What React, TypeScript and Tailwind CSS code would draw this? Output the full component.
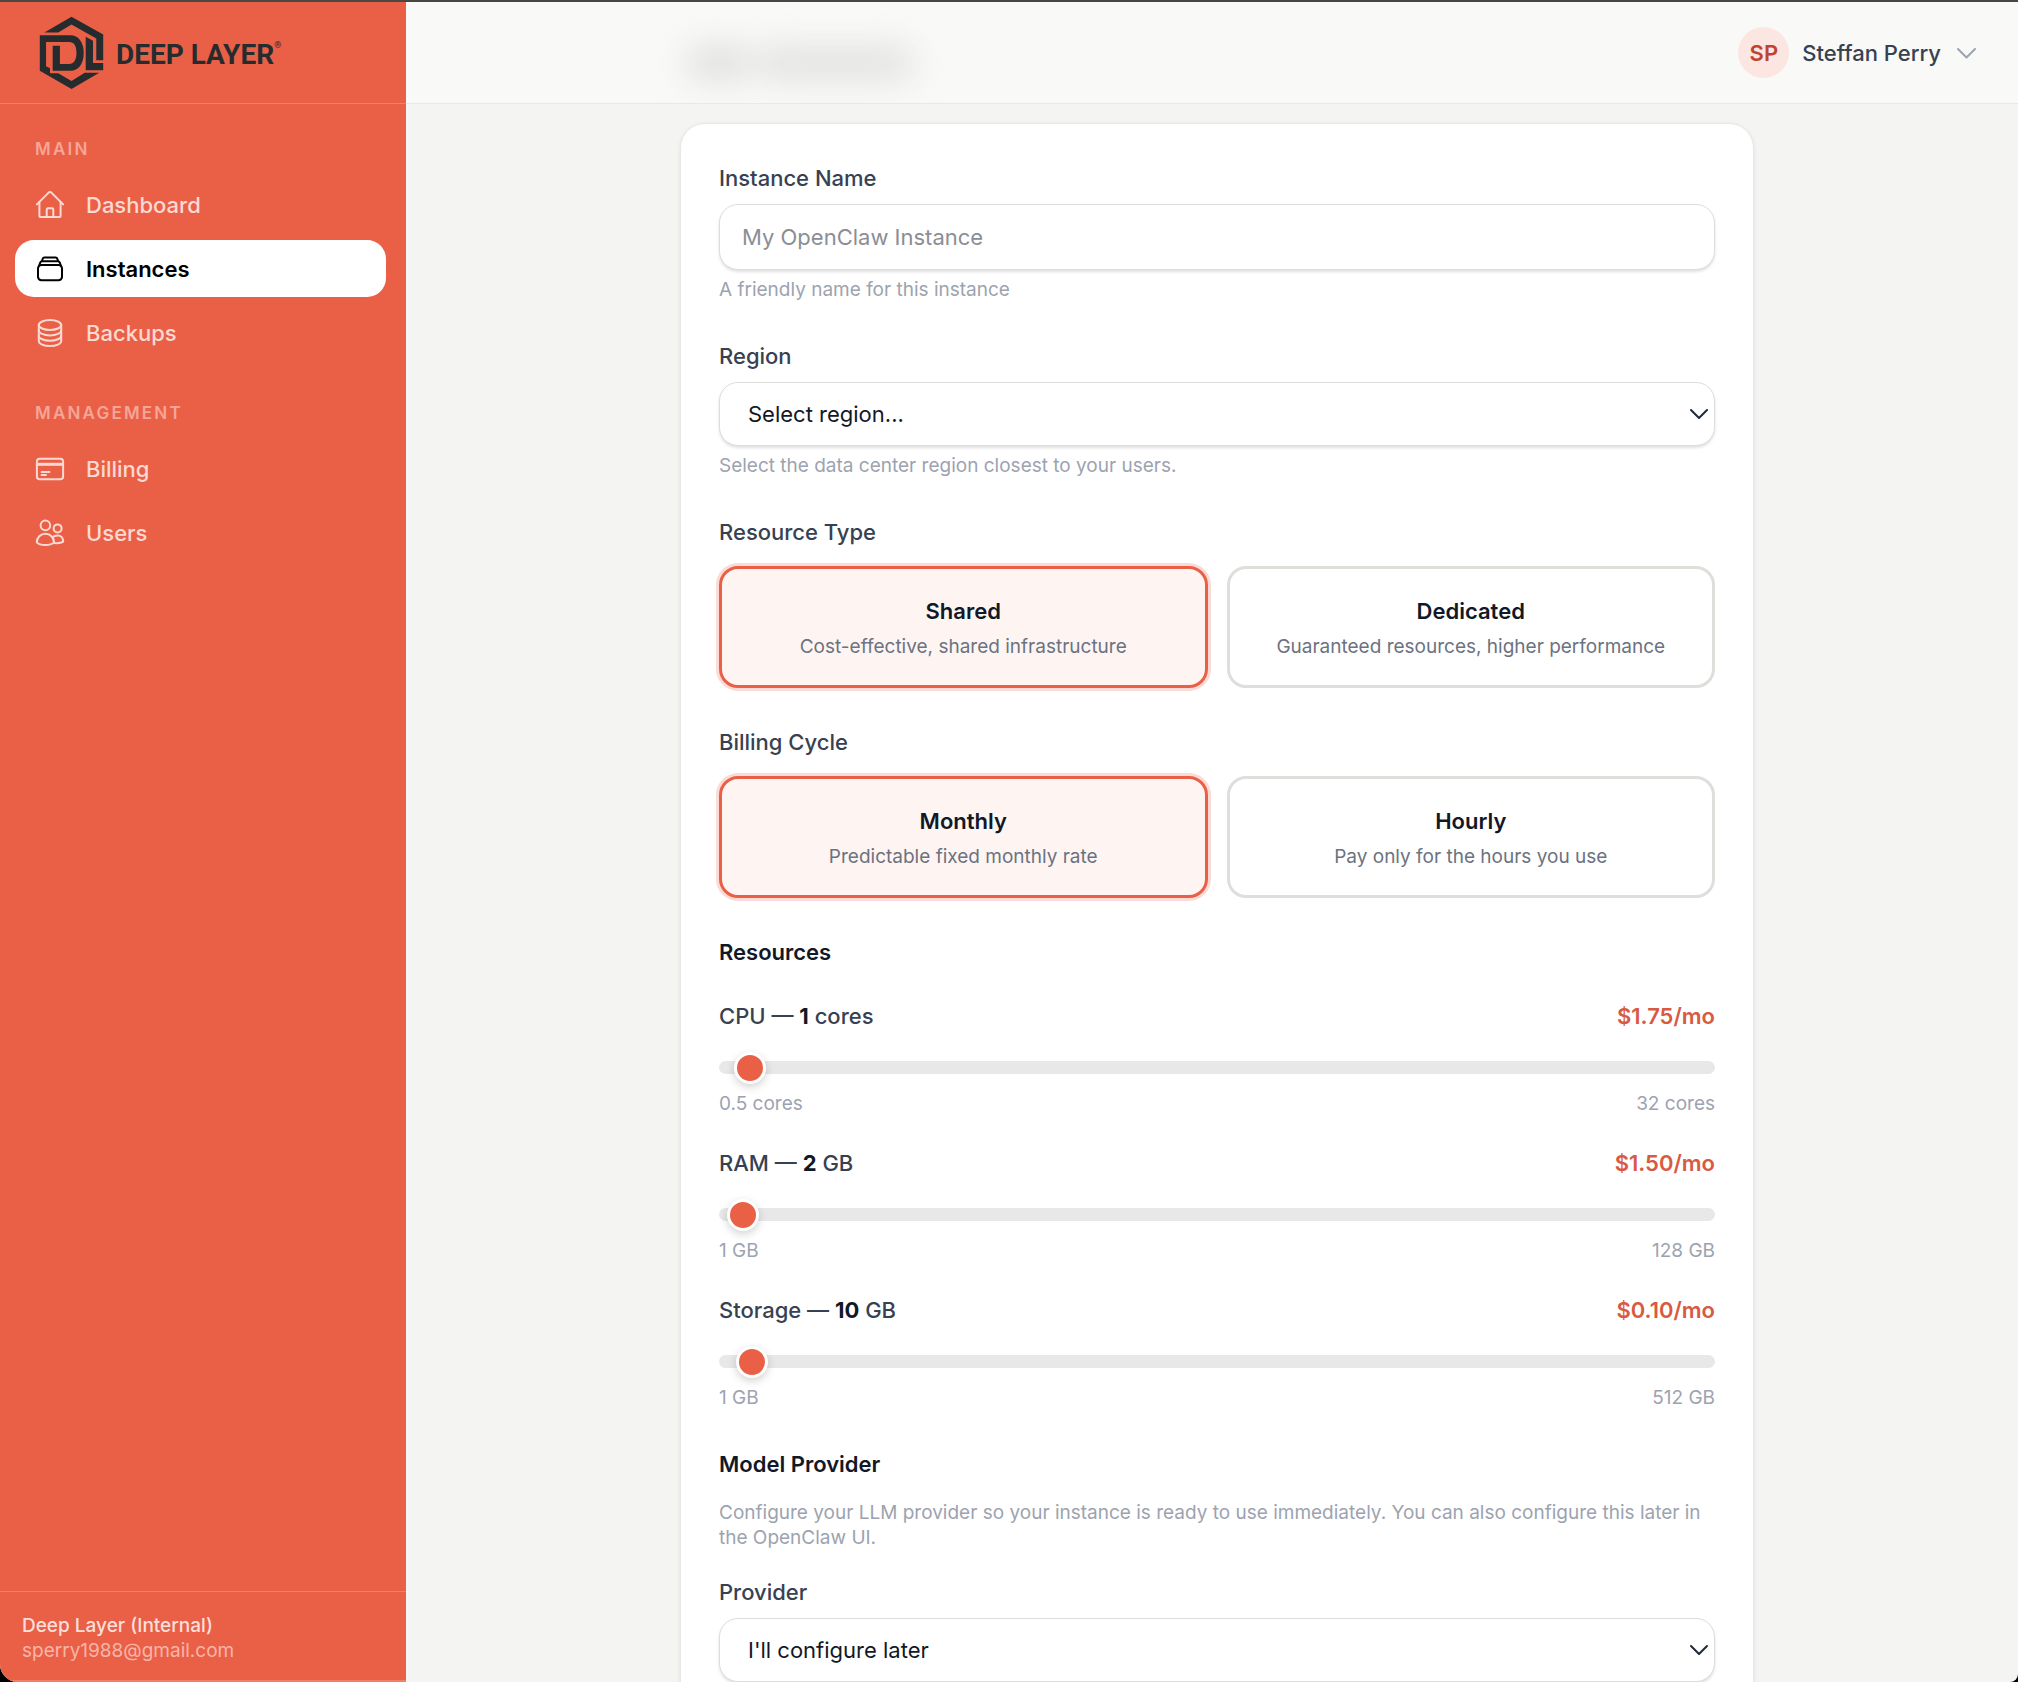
import { useState } from 'react';
import type { ReactNode } from 'react';

function Logo() {
  return (
    <a href="#" className="flex h-[101px] items-center gap-3 pl-[39px] text-[#262c2e]">
      <svg viewBox="118 46 196 224" className="h-[74px] w-[65px] shrink-0" fill="currentColor" aria-hidden="true">
        <path d="M134 96 L216 48 L312 102 V180 H291 V114 L216 72 L176 96 Z" />
        <path d="M120 104 H212 C238 104 253 126 253 157 C253 190 238 212 212 212 H159 V136 H181 V191 H208 C224 191 231 178 231 157 C231 137 224 125 208 125 H139 V198 L151 204 V219 H176 L216 243 L256 218 H300 L216 267 L120 212 Z" />
        <path d="M259 109 L281 121 V188 H312 V210 H259 Z" />
      </svg>
      <span className="flex pt-1 font-['Roboto',sans-serif] text-[28px] leading-8 font-bold">
        DEEP LAYER
        <sup className="top-0 text-[9px] leading-3 font-medium">®</sup>
      </span>
    </a>
  );
}

function Icon({ children }: { children: ReactNode }) {
  return (
    <svg
      viewBox="0 0 32 32"
      className="size-8 shrink-0"
      fill="none"
      stroke="currentColor"
      strokeWidth="2"
      strokeLinecap="round"
      strokeLinejoin="round"
      aria-hidden="true"
    >
      {children}
    </svg>
  );
}

const icons = {
  home: (
    <Icon>
      <path d="M2.9 15.4 L14.6 3.6 Q16 2.4 17.4 3.6 L29.1 15.4" />
      <path d="M5.4 13 V26.4 Q5.4 28 7 28 H25 Q26.6 28 26.6 26.4 V13" />
      <path d="M12.7 28 V20.6 Q12.7 19.3 14 19.3 H18 Q19.3 19.3 19.3 20.6 V28" />
    </Icon>
  ),
  instances: (
    <Icon>
      <rect x="4" y="12" width="24" height="15.2" rx="3.4" />
      <path d="M5 13 L6.2 9.6 Q6.7 8.2 8.2 8.2 H23.8 Q25.3 8.2 25.8 9.6 L27 13" />
      <path d="M8 8 L8.6 6 Q9 4.6 10.4 4.6 H21.6 Q23 4.6 23.4 6 L24 8" />
    </Icon>
  ),
  backups: (
    <Icon>
      <ellipse cx="16" cy="8" rx="11.2" ry="5" />
      <path d="M4.8 8 V24 C4.8 26.8 9.8 29 16 29 S27.2 26.8 27.2 24 V8" />
      <path d="M4.8 13.4 C4.8 16.2 9.8 18.4 16 18.4 S27.2 16.2 27.2 13.4" />
      <path d="M4.8 18.7 C4.8 21.5 9.8 23.7 16 23.7 S27.2 21.5 27.2 18.7" />
    </Icon>
  ),
  billing: (
    <Icon>
      <rect x="2.9" y="5.8" width="26.2" height="20.4" rx="2.8" />
      <path d="M3 11.3 H29" strokeWidth="3" strokeLinecap="butt" />
      <path d="M7.6 19 H15.4 M7.6 22 H12" />
    </Icon>
  ),
  users: (
    <Icon>
      <circle cx="11.4" cy="8.4" r="4.8" />
      <circle cx="23.6" cy="11.4" r="4" />
      <path d="M2.8 25.4 C2.8 20.4 6.6 16.8 11.4 16.8 S20 20.4 20 25.4 C18 27.4 15 28 11.4 28 S4.6 27.4 2.8 25.4 Z" />
      <path d="M18.4 20.4 C19.6 19.2 21.4 18.4 23.6 18.4 C27 18.4 29.2 21.2 29.2 24.6 C27.4 26 24 26.4 19.8 26" />
    </Icon>
  ),
};

function NavItem({ icon, label, active = false }: { icon: ReactNode; label: string; active?: boolean }) {
  return (
    <a
      href="#"
      aria-current={active ? 'page' : undefined}
      className={
        active
          ? 'flex h-[57px] items-center gap-5 rounded-[19px] bg-white pl-[19px] font-semibold text-black'
          : 'flex h-[57px] items-center gap-5 rounded-[19px] pl-[19px] font-medium text-[#fcd9d2]'
      }
    >
      {icon}
      {label}
    </a>
  );
}

function NavGroup({ title, children }: { title: string; children: ReactNode }) {
  return (
    <div>
      <h2 className="pl-5 text-[17px] leading-6 font-semibold tracking-[0.13em] text-[#f5a697]">{title}</h2>
      <div className="mt-[15px] flex flex-col gap-[7px]">{children}</div>
    </div>
  );
}

function Sidebar() {
  return (
    <aside className="flex w-[406px] shrink-0 flex-col border-b-2 border-[#f0806a] bg-[#ea6047] text-[22px] leading-8">
      <div className="border-b border-[#f0806a]">
        <Logo />
      </div>
      <nav className="flex flex-1 flex-col gap-10 pt-[33px] pr-5 pl-[15px]">
        <NavGroup title="MAIN">
          <NavItem icon={icons.home} label="Dashboard" />
          <NavItem icon={icons.instances} label="Instances" active />
          <NavItem icon={icons.backups} label="Backups" />
        </NavGroup>
        <NavGroup title="MANAGEMENT">
          <NavItem icon={icons.billing} label="Billing" />
          <NavItem icon={icons.users} label="Users" />
        </NavGroup>
      </nav>
      <div className="border-t border-[#f0806a] px-[22px] pt-[21px] pb-[17px] text-[19px] leading-[25px]">
        <p className="font-medium text-[#fcdfda]">Deep Layer (Internal)</p>
        <p className="text-[#f7b5a8]">sperry1988@gmail.com</p>
      </div>
    </aside>
  );
}

function Header() {
  return (
    <header className="relative flex h-[102px] shrink-0 items-center justify-end overflow-hidden border-b border-[#e8e8e8] bg-[#f9f9f7] pr-[40px]">
      <div aria-hidden="true" className="absolute top-[43px] left-[280px] flex gap-1 blur-lg">
        <div className="h-9 w-[66px] rounded-full bg-[#e1e1e1]" />
        <div className="h-9 w-[158px] rounded-full bg-[#e3e3e3]" />
      </div>
      <button type="button" className="flex items-center gap-[13px] text-[22px] leading-8 font-medium text-[#374151]">
        <span className="flex size-[51px] items-center justify-center rounded-full bg-[#fce6e2] font-semibold text-[#bf4430]">SP</span>
        Steffan Perry
        <svg viewBox="0 0 24 24" className="size-6" fill="none" stroke="#9ca3af" strokeWidth="2" strokeLinecap="round" strokeLinejoin="round" aria-hidden="true">
          <path d="M4 8 L12.5 16.5 L21 8" />
        </svg>
      </button>
    </header>
  );
}

function SelectField({ id, label, option }: { id: string; label: string; option: string }) {
  return (
    <div className="flex flex-col gap-[10px]">
      <label htmlFor={id} className="font-medium text-[#374151]">{label}</label>
      <div className="grid items-center">
        <select
          id={id}
          className="col-start-1 row-start-1 h-16 w-full appearance-none rounded-[19px] border border-[#dcdddc] bg-white px-7 text-[#111827] shadow-[0_2px_3px_rgba(0,0,0,0.12)]"
        >
          <option>{option}</option>
        </select>
        <svg
          viewBox="0 0 20 20"
          className="pointer-events-none col-start-1 row-start-1 mr-[6px] size-5 justify-self-end"
          fill="none"
          stroke="#1f2937"
          strokeWidth="2"
          strokeLinecap="round"
          strokeLinejoin="round"
          aria-hidden="true"
        >
          <path d="M2 6 L10 14 L18 6" />
        </svg>
      </div>
    </div>
  );
}

function Hint({ children }: { children: ReactNode }) {
  return <p className="mt-[7px] text-[19px] leading-[25px] text-[#9ca3af]">{children}</p>;
}

type Choice = { title: string; text: string };

function ChoiceGroup({ label, choices }: { label: string; choices: Choice[] }) {
  const [selected, setSelected] = useState(0);
  return (
    <div role="group" aria-label={label}>
      <p className="font-medium text-[#374151]">{label}</p>
      <div className="mt-[18px] grid grid-cols-2 gap-[19px]">
        {choices.map((choice, index) => (
          <button
            key={choice.title}
            type="button"
            aria-pressed={selected === index}
            onClick={() => setSelected(index)}
            className={
              selected === index
                ? 'flex h-[122px] flex-col items-center justify-center gap-[7px] rounded-[19px] border-3 border-[#ea6047] bg-[#fef5f3] ring-3 ring-[#fbdbd5]'
                : 'flex h-[122px] flex-col items-center justify-center gap-[7px] rounded-[19px] border-3 border-[#dededb] bg-white'
            }
          >
            <span className="font-semibold text-[#111827]">{choice.title}</span>
            <span className="text-[19px] leading-[25px] text-[#6b7280]">{choice.text}</span>
          </button>
        ))}
      </div>
    </div>
  );
}

type Resource = {
  id: string;
  name: string;
  unit: string;
  min: number;
  max: number;
  step: number;
  initial: number;
  price: string;
};

const resources: Resource[] = [
  { id: 'cpu', name: 'CPU', unit: 'cores', min: 0.5, max: 32, step: 0.5, initial: 1, price: '$1.75/mo' },
  { id: 'ram', name: 'RAM', unit: 'GB', min: 1, max: 128, step: 1, initial: 2, price: '$1.50/mo' },
  { id: 'storage', name: 'Storage', unit: 'GB', min: 1, max: 512, step: 1, initial: 10, price: '$0.10/mo' },
];

function ResourceSlider({ resource }: { resource: Resource }) {
  const [value, setValue] = useState(resource.initial);
  return (
    <div>
      <div className="flex justify-between">
        <label htmlFor={resource.id} className="font-medium text-[#374151]">
          {resource.name} — <strong className="font-bold text-[#111827]">{value}</strong> {resource.unit}
        </label>
        <span className="font-semibold text-[#d95a43]">{resource.price}</span>
      </div>
      <input
        id={resource.id}
        type="range"
        min={resource.min}
        max={resource.max}
        step={resource.step}
        value={value}
        onChange={(event) => setValue(Number(event.target.value))}
        className="mt-[29px] block h-[13px] w-full appearance-none rounded-full bg-[#e8e8e8] [&::-webkit-slider-thumb]:size-8 [&::-webkit-slider-thumb]:appearance-none [&::-webkit-slider-thumb]:rounded-full [&::-webkit-slider-thumb]:border-3 [&::-webkit-slider-thumb]:border-white [&::-webkit-slider-thumb]:bg-[#ea6047] [&::-webkit-slider-thumb]:shadow-[0_3px_8px_rgba(0,0,0,0.18)]"
      />
      <div className="mt-[17px] flex justify-between text-[19px] leading-[25px] text-[#9ca3af]">
        <span>{resource.min} {resource.unit}</span>
        <span>{resource.max} {resource.unit}</span>
      </div>
    </div>
  );
}

function InstanceForm() {
  return (
    <form className="mx-auto flex w-full max-w-[1074px] flex-col gap-[38px] rounded-[25px] border border-[#e8e8e8] bg-white px-[38px] py-[38px] shadow-[0_1px_4px_rgba(0,0,0,0.08)]">
      <div>
        <label htmlFor="name" className="block font-medium text-[#374151]">Instance Name</label>
        <input
          id="name"
          type="text"
          placeholder="My OpenClaw Instance"
          className="mt-[10px] block h-[66px] w-full rounded-[19px] border border-[#dcdddc] bg-white px-[22px] text-[#111827] shadow-[0_2px_3px_rgba(0,0,0,0.12)] placeholder:text-[#8b8e95]"
        />
        <Hint>A friendly name for this instance</Hint>
      </div>
      <div>
        <SelectField id="region" label="Region" option="Select region..." />
        <Hint>Select the data center region closest to your users.</Hint>
      </div>
      <ChoiceGroup
        label="Resource Type"
        choices={[
          { title: 'Shared', text: 'Cost-effective, shared infrastructure' },
          { title: 'Dedicated', text: 'Guaranteed resources, higher performance' },
        ]}
      />
      <ChoiceGroup
        label="Billing Cycle"
        choices={[
          { title: 'Monthly', text: 'Predictable fixed monthly rate' },
          { title: 'Hourly', text: 'Pay only for the hours you use' },
        ]}
      />
      <section>
        <h3 className="mb-8 font-semibold text-[#111827]">Resources</h3>
        <div className="flex flex-col gap-[31px]">
          {resources.map((resource) => (
            <ResourceSlider key={resource.id} resource={resource} />
          ))}
        </div>
      </section>
      <section>
        <h3 className="font-semibold text-[#111827]">Model Provider</h3>
        <p className="mt-5 mb-[26px] text-[19px] leading-[25px] text-[#9ca3af]">
          Configure your LLM provider so your instance is ready to use immediately. You can also configure this later in the OpenClaw UI.
        </p>
        <SelectField id="provider" label="Provider" option="I'll configure later" />
      </section>
    </form>
  );
}

export default function App() {
  return (
    <div className="h-screen overflow-hidden bg-black font-['Inter',sans-serif] text-[22px] leading-8">
      <div className="flex h-full overflow-hidden rounded-br-lg rounded-bl-[18px] border-t-2 border-[#4a4642] bg-[#f4f4f2]">
        <Sidebar />
        <div className="flex min-w-0 flex-1 flex-col">
          <Header />
          <main className="min-h-0 flex-1 overflow-hidden pt-[19px] pr-8 pl-[42px]">
            <InstanceForm />
          </main>
        </div>
      </div>
    </div>
  );
}
